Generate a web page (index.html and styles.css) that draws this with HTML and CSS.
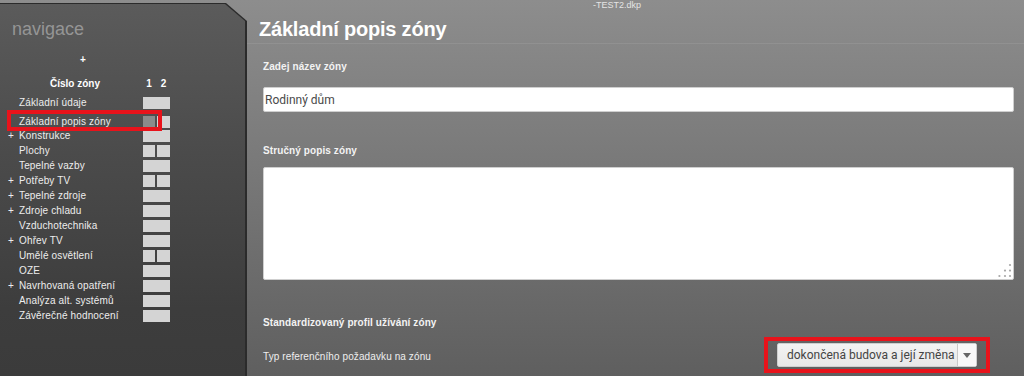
FILE: index.html
```html
<!DOCTYPE html>
<html lang="cs">
<head>
<meta charset="utf-8">
<title>Základní popis zóny</title>
<link rel="stylesheet" href="styles.css">
</head>
<body>
<div class="app">
  <aside class="sidebar">
    <div class="sidebar-inner">
      <div class="nav-title">navigace</div>
      <div class="nav-plus">+</div>
      <div class="nav-head">
        <span class="nav-head-label">Číslo zóny</span>
        <span class="nav-head-nums"><span class="n1">1</span><span class="n2">2</span></span>
      </div>
      <ul class="nav-list">
        <li class="nav-row first"><span class="exp"></span><span class="lbl">Základní údaje</span><span class="cells"><i class="cell full"></i></span></li>
        <li class="nav-row active"><span class="exp"></span><span class="lbl">Základní popis zóny</span><span class="cells"><i class="cell c1 dark"></i><i class="cell c2"></i></span></li>
        <li class="nav-row"><span class="exp">+</span><span class="lbl">Konstrukce</span><span class="cells"><i class="cell full"></i></span></li>
        <li class="nav-row"><span class="exp"></span><span class="lbl">Plochy</span><span class="cells"><i class="cell c1"></i><i class="cell c2"></i></span></li>
        <li class="nav-row"><span class="exp"></span><span class="lbl">Tepelné vazby</span><span class="cells"><i class="cell full"></i></span></li>
        <li class="nav-row"><span class="exp">+</span><span class="lbl">Potřeby TV</span><span class="cells"><i class="cell c1"></i><i class="cell c2"></i></span></li>
        <li class="nav-row"><span class="exp">+</span><span class="lbl">Tepelné zdroje</span><span class="cells"><i class="cell full"></i></span></li>
        <li class="nav-row"><span class="exp">+</span><span class="lbl">Zdroje chladu</span><span class="cells"><i class="cell full"></i></span></li>
        <li class="nav-row"><span class="exp"></span><span class="lbl">Vzduchotechnika</span><span class="cells"><i class="cell full"></i></span></li>
        <li class="nav-row"><span class="exp">+</span><span class="lbl">Ohřev TV</span><span class="cells"><i class="cell full"></i></span></li>
        <li class="nav-row"><span class="exp"></span><span class="lbl">Umělé osvětlení</span><span class="cells"><i class="cell c1"></i><i class="cell c2"></i></span></li>
        <li class="nav-row"><span class="exp"></span><span class="lbl">OZE</span><span class="cells"><i class="cell full"></i></span></li>
        <li class="nav-row"><span class="exp">+</span><span class="lbl">Navrhovaná opatření</span><span class="cells"><i class="cell full"></i></span></li>
        <li class="nav-row"><span class="exp"></span><span class="lbl">Analýza alt. systémů</span><span class="cells"><i class="cell full"></i></span></li>
        <li class="nav-row"><span class="exp"></span><span class="lbl">Závěrečné hodnocení</span><span class="cells"><i class="cell full"></i></span></li>
      </ul>
    </div>
  </aside>
  <main class="main">
    <header class="header">
      <div class="filename">-TEST2.dkp</div>
      <h1 class="title">Základní popis zóny</h1>
    </header>
    <div class="field-label lbl-name">Zadej název zóny</div>
    <input class="text-input" type="text" value="Rodinný dům">
    <div class="field-label lbl-desc">Stručný popis zóny</div>
    <div class="ta-wrap">
      <textarea class="text-area"></textarea>
      <svg class="grip" width="15" height="15" viewBox="0 0 15 15"><circle cx="13" cy="2" r="1.1"/><circle cx="8" cy="7.6" r="1.1"/><circle cx="13" cy="7.6" r="1.1"/><circle cx="2.4" cy="13" r="1.1"/><circle cx="8" cy="13" r="1.1"/><circle cx="13" cy="13" r="1.1"/></svg>
    </div>
    <div class="field-label lbl-section">Standardizovaný profil užívání zóny</div>
    <div class="select-row">
      <span class="select-row-label">Typ referenčního požadavku na zónu</span>
      <div class="highlight">
        <div class="select">
          <span class="select-value">dokončená budova a její změna</span>
          <span class="select-btn"><svg width="8" height="5" viewBox="0 0 8 5"><polygon points="0,0 8,0 4,5"/></svg></span>
        </div>
      </div>
    </div>
  </main>
</div>
</body>
</html>
```
FILE: styles.css
```css
*, *::before, *::after { box-sizing: border-box; }
html, body { margin: 0; padding: 0; }
body {
  width: 1024px;
  height: 376px;
  overflow: hidden;
  background: linear-gradient(#8d8d8d, #5f5f5f);
  font-family: "Liberation Sans", Arial, sans-serif;
}
.app { display: flex; height: 376px; }

/* sidebar */
.sidebar {
  flex: 0 0 247px;
  margin-top: 3px;
  background: #2b2b2b;
  clip-path: polygon(0 0, 226px 0, 247px 18px, 247px 100%, 0 100%);
  display: flex;
}
.sidebar-inner {
  flex: 1;
  margin: 1px 2px 0 0;
  padding-top: 15px;
  background: linear-gradient(#5b5b5b, #4b4b4b 40%, #3d3d3d 82%, #3b3b3b);
  clip-path: polygon(0 0, 225px 0, 245px 17px, 245px 100%, 0 100%);
}
.nav-title {
  font-size: 18px;
  line-height: 20px;
  color: #959595;
  padding-left: 12px;
}
.nav-plus {
  margin-top: 15px;
  font-weight: bold;
  font-size: 10px;
  line-height: 12px;
  color: #fff;
  padding-left: 80px;
}
.nav-head {
  margin-top: 11px;
  display: flex;
  font-weight: bold;
  font-size: 10px;
  line-height: 14px;
  color: #fff;
}
.nav-head-label { width: 143px; padding-left: 50px; }
.nav-head-nums { display: flex; gap: 2px; }
.nav-head-nums .n1 { width: 12px; text-align: center; }
.nav-head-nums .n2 { width: 13px; text-align: center; }
.nav-list { list-style: none; margin: 5px 0 0; padding: 0; }
.nav-row {
  display: flex;
  height: 15px;
  font-size: 10px;
  line-height: 13px;
  color: #ededed;
  letter-spacing: 0.15px;
}
.nav-row.first { margin-bottom: 4px; }
.nav-row.active { height: 14px; position: relative; }
.nav-row.active::after {
  content: "";
  position: absolute;
  left: 7px;
  top: -5px;
  width: 155px;
  height: 21px;
  border: 4px solid #e8131b;
}
.exp { flex: 0 0 19px; padding-left: 8px; }
.lbl { flex: 0 0 124px; white-space: nowrap; }
.cells { display: flex; gap: 2px; width: 27px; height: 12px; margin-top: 1px; }
.cell { display: block; height: 12px; background: #d4d4d4; }
.cell.full { width: 27px; }
.cell.c1 { width: 12px; }
.cell.c2 { width: 13px; }
.cell.dark { background: #8b8b8b; }

/* main */
.main {
  flex: 1;
  min-width: 0;
  padding: 0 10px 0 16px;
  display: flex;
  flex-direction: column;
}
.header {
  margin: 0 -10px 0 -16px;
  padding: 0 10px 2px 16px;
  border-bottom: 1px solid rgba(255, 255, 255, 0.08);
}
.filename {
  font-size: 9px;
  line-height: 11px;
  color: #e4e4e4;
  padding-left: 330px;
}
.title {
  margin: 6px 0 0 -4px;
  font-size: 20px;
  line-height: 24px;
  font-weight: bold;
  color: #fff;
  letter-spacing: -0.2px;
}
.field-label {
  font-weight: bold;
  font-size: 10px;
  line-height: 14px;
  color: #f3f3f3;
  letter-spacing: 0.1px;
}
.lbl-name { margin-top: 16px; }
.text-input {
  display: block;
  margin-top: 13px;
  width: 100%;
  height: 25px;
  border: 1px solid #cfcfcf;
  border-radius: 2px;
  background: #fff;
  padding: 0 0 0 1px;
  font-family: Roboto, "Liberation Sans", sans-serif;
  font-size: 12px;
  color: #4a4a4a;
  outline: none;
}
.lbl-desc { margin-top: 32px; }
.ta-wrap { margin-top: 9px; position: relative; height: 113px; }
.text-area {
  display: block;
  width: 100%;
  height: 113px;
  resize: none;
  border: 1px solid #cfcfcf;
  border-radius: 2px;
  background: #fff;
  outline: none;
}
.grip { position: absolute; right: 2px; bottom: 2px; fill: #a8a8a8; }
.lbl-section { margin-top: 36px; }
.select-row {
  margin-top: 7px;
  display: flex;
  justify-content: space-between;
  align-items: flex-start;
}
.select-row-label {
  margin-top: 13px;
  font-size: 10px;
  line-height: 14px;
  color: #eeeeee;
  letter-spacing: 0.1px;
}
.highlight {
  margin-right: 24px;
  border: 4px solid #e8131b;
  padding: 2px 9px;
}
.select {
  width: 200px;
  height: 24px;
  display: flex;
  border: 1px solid #cfcfcf;
  border-radius: 2px;
  background: linear-gradient(#f3f3f3, #e8e8e8);
  font-family: Roboto, "Liberation Sans", sans-serif;
  font-size: 12px;
  color: #444;
}
.select-value {
  flex: 1;
  padding-left: 9px;
  line-height: 22px;
  white-space: nowrap;
  overflow: hidden;
}
.select-btn {
  flex: 0 0 19px;
  border-left: 1px solid #c9c9c9;
  background: #f8f8f8;
  display: flex;
  align-items: center;
  justify-content: center;
  fill: #666;
}
```
